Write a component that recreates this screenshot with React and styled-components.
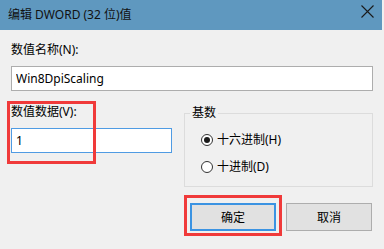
import React from "react";
import styled, { createGlobalStyle } from "styled-components";

const GlobalStyle = createGlobalStyle`
  html, body {
    margin: 0;
    padding: 0;
    background: #f0f0f0;
    font-family: "Noto Sans", "Noto Sans CJK SC", sans-serif;
    color: #000;
  }
`;

const Window = styled.div`
  width: 382px;
  height: 249px;
  background: #f0f0f0;
  display: flex;
  flex-direction: column;
  overflow: hidden;
`;

const TitleBar = styled.div`
  height: 30px;
  flex: none;
  background: #5f98bf;
  display: flex;
  align-items: flex-start;
  justify-content: space-between;
  padding: 0 8px;
`;

const Title = styled.div`
  font-size: 12px;
  line-height: 30px;
  color: #111;
`;

const CloseIcon = styled.svg`
  margin-top: 5px;
  width: 13px;
  height: 13px;
`;

const Body = styled.div`
  display: flex;
  flex-direction: column;
  padding: 12px 9px 0 11px;
`;

const Label = styled.div`
  font-size: 12px;
  line-height: 16px;
`;

const TextInput = styled.input`
  box-sizing: border-box;
  margin: 8px 0 0;
  height: 25px;
  width: ${(p) => p.$width || "100%"};
  border: 1px solid ${(p) => (p.$focused ? "#4f9be3" : "#adadad")};
  background: #fff;
  padding: 0 4px;
  font: inherit;
  font-size: 12px;
  color: #000;
  outline: none;
`;

const Row = styled.div`
  display: flex;
  gap: 12px;
  margin-top: 13px;
`;

const LeftCol = styled.div`
  position: relative;
  width: 161px;
  display: flex;
  flex-direction: column;
`;

const Highlight = styled.div`
  position: absolute;
  border: 3px solid #f03a3a;
  pointer-events: none;
  box-sizing: border-box;
`;

const Group = styled.fieldset`
  box-sizing: border-box;
  margin: 1px 0 0;
  padding: 0;
  width: 189px;
  height: 82px;
  border: 1px solid #dcdcdc;
  min-width: 0;
`;

const Legend = styled.legend`
  margin-left: 5px;
  padding: 0 2px;
  font-size: 12px;
  line-height: 16px;
`;

const RadioList = styled.div`
  display: flex;
  flex-direction: column;
  gap: 11px;
  padding: 11px 0 0 16px;
`;

const RadioRow = styled.label`
  display: flex;
  align-items: center;
  gap: 4px;
  font-size: 12px;
  line-height: 16px;
`;

const RadioCircle = styled.span`
  box-sizing: border-box;
  width: 12px;
  height: 12px;
  border-radius: 50%;
  border: 1px solid #333;
  background: #fff;
  display: flex;
  align-items: center;
  justify-content: center;
  &::after {
    content: "";
    display: ${(p) => (p.$checked ? "block" : "none")};
    width: 6px;
    height: 6px;
    border-radius: 50%;
    background: #1a1a1a;
  }
`;

const ButtonRow = styled.div`
  display: flex;
  justify-content: flex-end;
  gap: 10px;
  margin-top: 16px;
  margin-right: 1px;
`;

const ButtonWrap = styled.div`
  position: relative;
`;

const Button = styled.button`
  box-sizing: border-box;
  width: 86px;
  height: 28px;
  background: #e1e1e1;
  border: ${(p) => (p.$default ? "2px solid #3b93e2" : "1px solid #adadad")};
  font: inherit;
  font-size: 12px;
  color: #000;
  padding: 0;
  display: flex;
  align-items: center;
  justify-content: center;
`;

export default function App() {
  return (
    <>
      <GlobalStyle />
      <Window>
        <TitleBar>
          <Title>编辑 DWORD (32 位)值</Title>
          <CloseIcon viewBox="0 0 13 13">
            <path d="M0.5 0.5 L12.5 12.5 M12.5 0.5 L0.5 12.5" stroke="#1a1a1a" strokeWidth="1.1" fill="none" />
          </CloseIcon>
        </TitleBar>
        <Body>
          <Label>数值名称(N):</Label>
          <TextInput readOnly value="Win8DpiScaling" />
          <Row>
            <LeftCol>
              <Label>数值数据(V):</Label>
              <TextInput readOnly value="1" $focused />
              <Highlight style={{ left: -4, top: -3, width: 89, height: 63 }} />
            </LeftCol>
            <Group>
              <Legend>基数</Legend>
              <RadioList>
                <RadioRow>
                  <RadioCircle $checked />
                  十六进制(H)
                </RadioRow>
                <RadioRow>
                  <RadioCircle />
                  十进制(D)
                </RadioRow>
              </RadioList>
            </Group>
          </Row>
          <ButtonRow>
            <ButtonWrap>
              <Button $default>确定</Button>
              <Highlight style={{ left: -6, top: -8, right: -6, bottom: -5 }} />
            </ButtonWrap>
            <ButtonWrap>
              <Button>取消</Button>
            </ButtonWrap>
          </ButtonRow>
        </Body>
      </Window>
    </>
  );
}
